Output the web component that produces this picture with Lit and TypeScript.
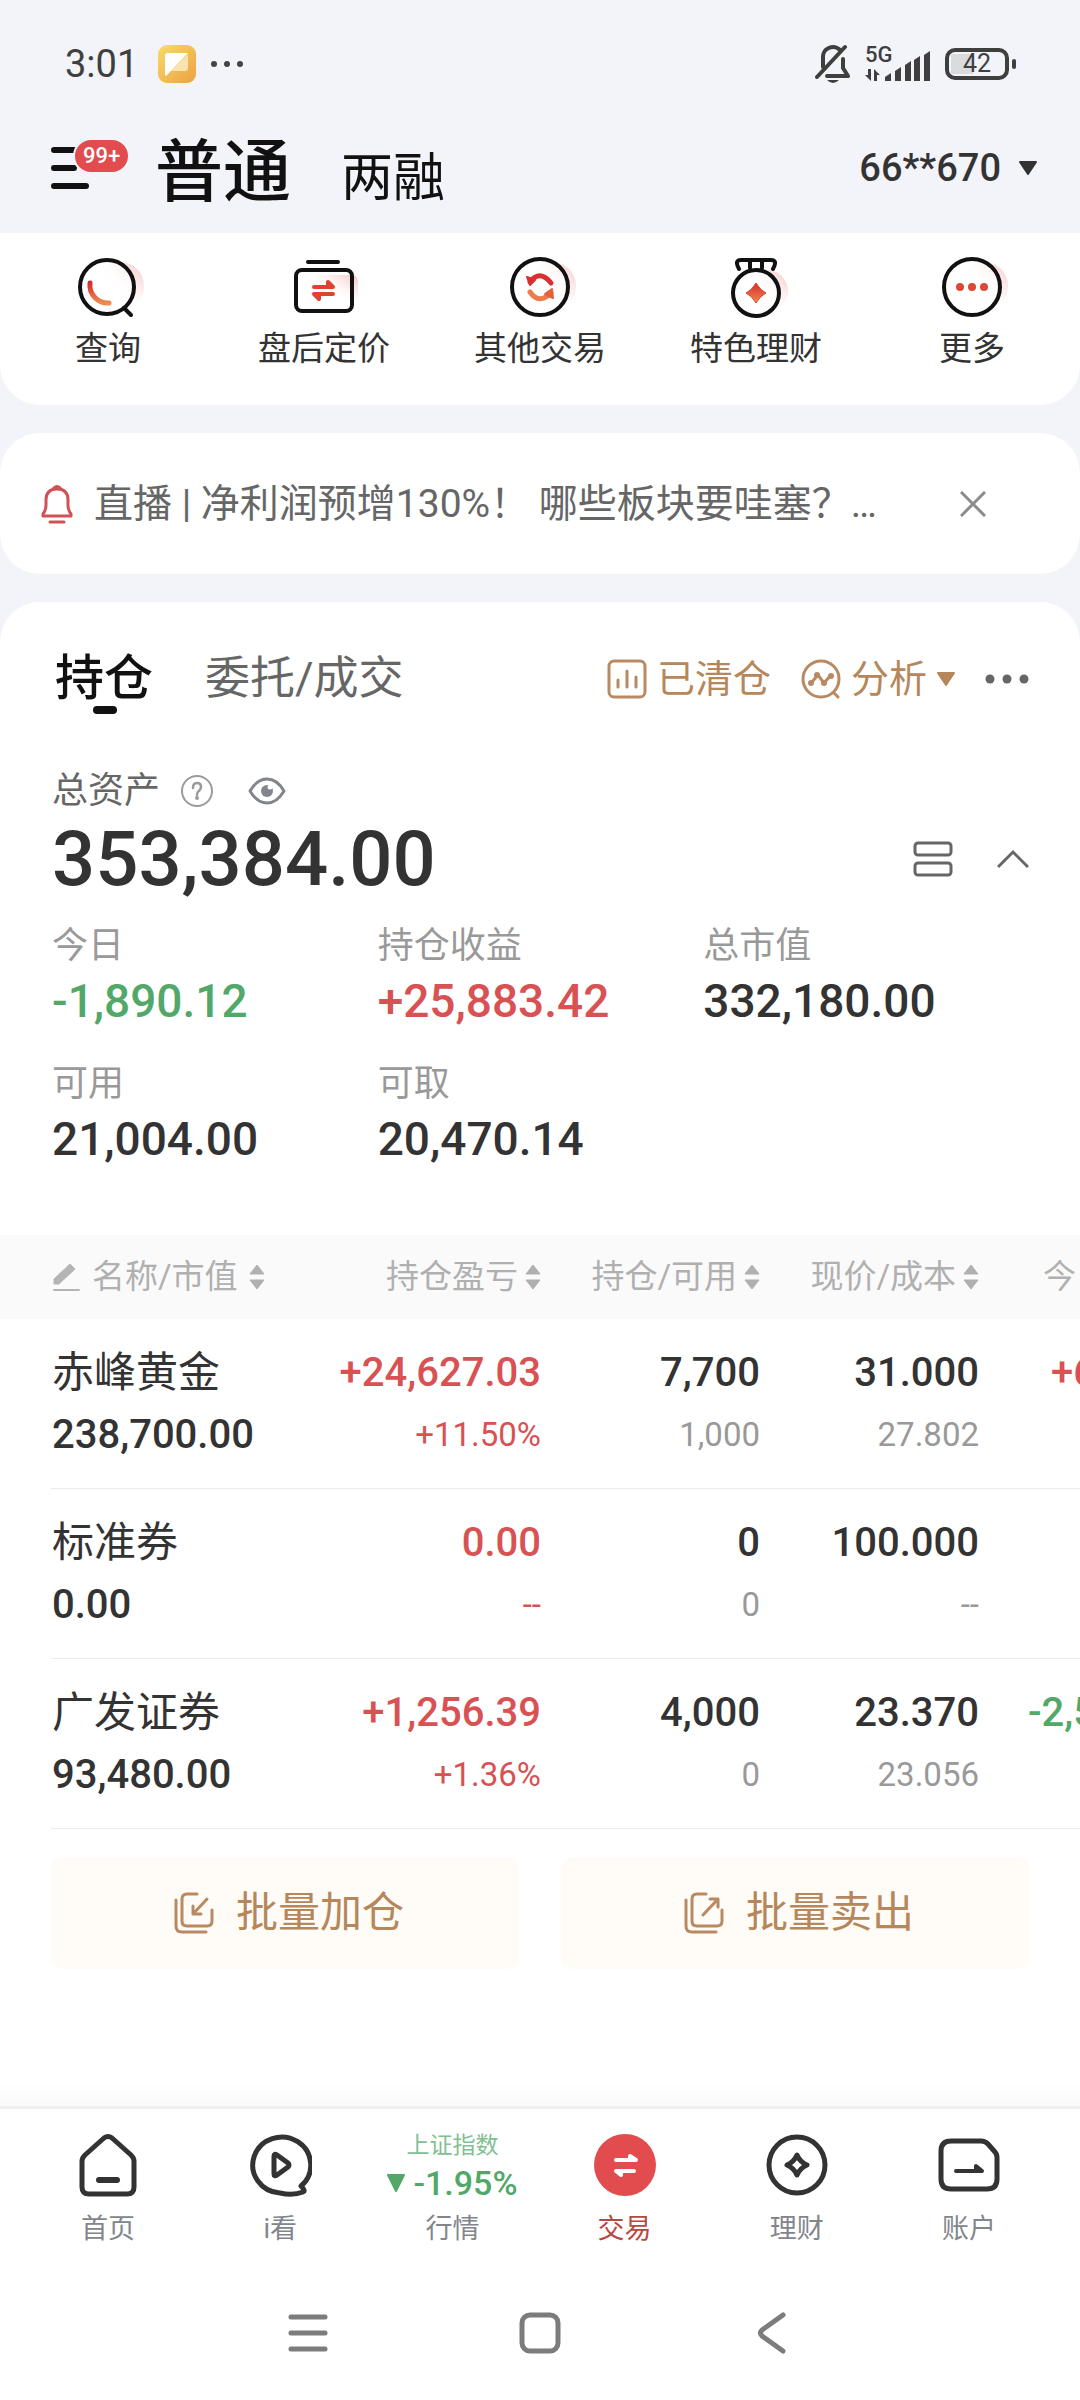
import { LitElement, html, css, svg, nothing } from "lit";
import { customElement, property } from "lit/decorators.js";

/* ---------- data ---------- */

const shortcuts = [
  { icon: "query", label: "查询" },
  { icon: "fixed", label: "盘后定价" },
  { icon: "other", label: "其他交易" },
  { icon: "wealth", label: "特色理财" },
  { icon: "more", label: "更多" },
];

const figures = [
  { label: "今日", value: "-1,890.12", tone: "down" },
  { label: "持仓收益", value: "+25,883.42", tone: "up" },
  { label: "总市值", value: "332,180.00", tone: "" },
  { label: "可用", value: "21,004.00", tone: "" },
  { label: "可取", value: "20,470.14", tone: "" },
];

const columns = ["名称/市值", "持仓盈亏", "持仓/可用", "现价/成本", "今日盈亏"];

const holdings = [
  { name: "赤峰黄金", worth: "238,700.00", gain: "+24,627.03", rate: "+11.50%", held: "7,700", free: "1,000", price: "31.000", cost: "27.802", today: "+630.00", tone: "up" },
  { name: "标准券", worth: "0.00", gain: "0.00", rate: "--", held: "0", free: "0", price: "100.000", cost: "--", today: "", tone: "up" },
  { name: "广发证券", worth: "93,480.00", gain: "+1,256.39", rate: "+1.36%", held: "4,000", free: "0", price: "23.370", cost: "23.056", today: "-2,520.00", tone: "down" },
];

/* ---------- icons ---------- */

const redFade = svg`
  <defs>
    <linearGradient id="hot" x1="0" y1="0" x2="0" y2="1">
      <stop offset="0" stop-color="#d92b2f" /><stop offset="1" stop-color="#ee8a4e" />
    </linearGradient>
    <linearGradient id="glow" x1="1" y1="0" x2="0" y2="1">
      <stop offset="0" stop-color="#f5c0c2" /><stop offset="0.6" stop-color="#fdf0f0" stop-opacity="0" />
    </linearGradient>
  </defs>`;

const icons: Record<string, { w: number; h: number; art: unknown }> = {
  query: {
    w: 80, h: 64,
    art: svg`${redFade}<circle cx="52" cy="31" r="24" fill="url(#glow)" /><circle cx="39" cy="32" r="27" fill="#fff" fill-opacity="0.6" stroke="#111" stroke-width="4" />
      <path d="M56 53l7 7" stroke="#111" stroke-width="4" stroke-linecap="round" />
      <path d="M22 28a18 18 0 0 0 19 20" fill="none" stroke="url(#hot)" stroke-width="5" stroke-linecap="round" />`,
  },
  fixed: {
    w: 80, h: 64,
    art: svg`${redFade}<rect x="28" y="20" width="46" height="28" rx="6" fill="url(#glow)" />
      <path d="M24 7h30" stroke="#111" stroke-width="4" stroke-linecap="round" />
      <rect x="12" y="15" width="56" height="41" rx="6" fill="none" stroke="#111" stroke-width="4" />
      <path d="M30 32h19l-5-5v5M49 39H30l5 5v-5" fill="#dd4232" stroke="#dd4232" stroke-width="4" stroke-linejoin="round" stroke-linecap="round" />`,
  },
  other: {
    w: 80, h: 64,
    art: svg`${redFade}<circle cx="52" cy="31" r="24" fill="url(#glow)" /><circle cx="40" cy="32" r="28" fill="#fff" fill-opacity="0.6" stroke="#111" stroke-width="4" />
      <path d="M30 27q10-13 21 1" fill="none" stroke="#d9302f" stroke-width="5" stroke-linecap="round" />
      <path d="M27 22l3 8 5-5z" fill="#d9302f" stroke="#d9302f" stroke-width="2" stroke-linejoin="round" />
      <path d="M30 37q9 13 21 1" fill="none" stroke="#ec7c49" stroke-width="5" stroke-linecap="round" />
      <path d="M53 43l-1-9-7 5z" fill="#e4603e" stroke="#e4603e" stroke-width="2" stroke-linejoin="round" />`,
  },
  wealth: {
    w: 80, h: 64,
    art: svg`${redFade}<circle cx="51" cy="36" r="21" fill="url(#glow)" /><circle cx="40" cy="38" r="23" fill="#fff" fill-opacity="0.6" stroke="#111" stroke-width="4" />
      <path d="M23 14q-5-9 2-9h30q7 0 2 9M34 6v7M46 6v7" fill="none" stroke="#111" stroke-width="4" stroke-linecap="round" />
      <path d="M40 28q4 7 10 10-6 3-10 10-4-7-10-10 6-3 10-10z" fill="url(#hot)" stroke="#df4633" stroke-width="1" stroke-linejoin="round" />`,
  },
  more: {
    w: 80, h: 64,
    art: svg`${redFade}<circle cx="52" cy="31" r="24" fill="url(#glow)" /><circle cx="40" cy="32" r="28" fill="#fff" fill-opacity="0.6" stroke="#111" stroke-width="4" />
      <g fill="#da4a36"><circle cx="28" cy="32" r="4" /><circle cx="40" cy="32" r="4" /><circle cx="52" cy="32" r="4" /></g>`,
  },
  menu: {
    w: 38, h: 44,
    art: svg`<path d="M3 4h20M3 22h20M3 40h32" stroke="#111" stroke-width="6" stroke-linecap="round" />`,
  },
  note: {
    w: 38, h: 38,
    art: svg`<defs><linearGradient id="amber" x1="0" y1="0" x2="1" y2="1"><stop offset="0" stop-color="#f7dc66" /><stop offset="1" stop-color="#ee9f45" /></linearGradient></defs>
      <rect width="38" height="38" rx="9" fill="url(#amber)" />
      <path d="M30 9v14a3 3 0 0 1-3 3H13z" fill="#fbe3b0" /><path d="M7 11a3 3 0 0 1 3-3h20L9 30q-2 2-2-1z" fill="#fff" />`,
  },
  dots: {
    w: 34, h: 8,
    art: svg`<g fill="#444"><circle cx="4" cy="4" r="3" /><circle cx="17" cy="4" r="3" /><circle cx="30" cy="4" r="3" /></g>`,
  },
  mute: {
    w: 36, h: 40,
    art: svg`<g fill="none" stroke="#3f3f3f" stroke-width="4" stroke-linecap="round" stroke-linejoin="round">
        <path d="M8 23V14a10 10 0 0 1 17-8M28 15v9l5 8H12" /><path d="M2 33L30 3" /></g>
      <path d="M12 36h12q-6 6-12 0z" fill="#3f3f3f" />`,
  },
  data: {
    w: 16, h: 12,
    art: svg`<path d="M6 0v12L0 6h3V0zM9 12V0l6 6h-3v6z" fill="#3f3f3f" />`,
  },
  signal: {
    w: 46, h: 30,
    art: svg`<g fill="#3f3f3f"><path d="M0 26l6-4v8H0zM10 20l6-4v14h-6zM20 14l6-4v20h-6zM29 9l6-4v25h-6zM39 4l6-4v30h-6z" /></g>`,
  },
  caret: { w: 18, h: 14, art: svg`<path d="M1 1h16l-8 12z" fill="currentColor" stroke="currentColor" stroke-width="2" stroke-linejoin="round" />` },
  fall: { w: 18, h: 18, art: svg`<path d="M1 1h16l-8 16z" fill="currentColor" stroke="currentColor" stroke-width="2" stroke-linejoin="round" />` },
  bell: {
    w: 32, h: 40,
    art: svg`<path d="M2 32V30q3-4 3-9V16q0-11 11-11t11 11v5q0 5 3 9v2zM12 5q4-5 8 0M9 38h14" fill="none" stroke="#cf5356" stroke-width="3" stroke-linejoin="round" stroke-linecap="round" />`,
  },
  close: { w: 26, h: 26, art: svg`<path d="M1 1l24 24M25 1L1 25" stroke="#8c8c8c" stroke-width="3" />` },
  chart: {
    w: 40, h: 40,
    art: svg`<rect x="2" y="2" width="36" height="36" rx="5" fill="none" stroke="#b98a62" stroke-width="3" /><path d="M11 21v7M20 12v16M29 18v10" stroke="#b98a62" stroke-width="3" stroke-linecap="round" />`,
  },
  analyse: {
    w: 40, h: 40,
    art: svg`<g fill="none" stroke="#b98a62" stroke-width="3" stroke-linecap="round"><circle cx="20" cy="20" r="18" /><path d="M33 34l4 4M10 24l7-8 6 8 6-7" /></g>
      <g fill="#b98a62"><circle cx="10" cy="24" r="3" /><circle cx="16" cy="16" r="3" /><circle cx="23" cy="24" r="3" /><circle cx="30" cy="17" r="3" /></g>`,
  },
  ellipsis: { w: 44, h: 10, art: svg`<g fill="#666"><circle cx="5" cy="5" r="4.500" /><circle cx="22" cy="5" r="4.500" /><circle cx="39" cy="5" r="4.500" /></g>` },
  help: {
    w: 34, h: 34,
    art: svg`<circle cx="17" cy="17" r="15" fill="none" stroke="#9a9a9a" stroke-width="2" /><path d="M13 14q0-5 4-5t4 4q0 2-2 4-2 1-2 4" fill="none" stroke="#9a9a9a" stroke-width="2.500" stroke-linecap="round" /><circle cx="17" cy="24" r="2" fill="#9a9a9a" />`,
  },
  eye: {
    w: 38, h: 28,
    art: svg`<path d="M2 14Q9 2 19 2t17 12Q29 26 19 26T2 14z" fill="none" stroke="#82858c" stroke-width="3" stroke-linejoin="round" /><circle cx="19" cy="14" r="6" fill="#82858c" /><circle cx="22" cy="10" r="2.500" fill="#fff" />`,
  },
  list: { w: 40, h: 36, art: svg`<g fill="none" stroke="#666" stroke-width="3"><rect x="2" y="2" width="36" height="12" rx="3" /><rect x="2" y="22" width="36" height="12" rx="3" /></g>` },
  fold: { w: 32, h: 20, art: svg`<path d="M1 18L16 3l15 15" fill="none" stroke="#666" stroke-width="3" />` },
  pencil: { w: 28, h: 28, art: svg`<path d="M1 21v-5L17 1l5 5L6 21z" fill="#b4b4b4" stroke="#b4b4b4" stroke-linejoin="round" /><path d="M1 27h25" stroke="#b4b4b4" stroke-width="2" stroke-linecap="round" />` },
  sort: { w: 16, h: 28, art: svg`<path d="M8 2l7 9H1zM8 26l7-9H1z" fill="#b0b0b0" stroke="#b0b0b0" stroke-linejoin="round" />` },
  buy: {
    w: 40, h: 42,
    art: svg`<g fill="none" stroke="#b98a62" stroke-width="3" stroke-linecap="round" stroke-linejoin="round"><path d="M23 2H13q-5 0-5 5v22q0 5 5 5h20q5 0 5-5V18M2 8v26q0 6 6 6h24" /><path d="M33 7L19 22M19 14v8h8" /></g>`,
  },
  sell: {
    w: 40, h: 42,
    art: svg`<g fill="none" stroke="#b98a62" stroke-width="3" stroke-linecap="round" stroke-linejoin="round"><path d="M22 2H13q-5 0-5 5v22q0 5 5 5h20q5 0 5-5V18M2 8v26q0 6 6 6h24" /><path d="M19 23L34 7M26 7h8v8" /></g>`,
  },
  home: {
    w: 64, h: 64,
    art: svg`<path d="M6 28q0-3 3-6L28 5q4-3 8 0l19 17q3 3 3 6v26q0 7-7 7H13q-7 0-7-7z" fill="none" stroke="#333" stroke-width="5" stroke-linejoin="round" /><path d="M23 47h18" stroke="#333" stroke-width="6" stroke-linecap="round" />`,
  },
  watch: {
    w: 64, h: 64,
    art: svg`<path d="M53 53A29 28 0 1 0 32 60q13 3 23-1 3-1-2-6z" fill="none" stroke="#333" stroke-width="5" stroke-linejoin="round" />
      <path d="M26 23v18q0 3 3 1l11-8q2-2 0-4l-11-8q-3-2-3 1z" fill="none" stroke="#333" stroke-width="5" stroke-linejoin="round" />`,
  },
  trade: {
    w: 64, h: 64,
    art: svg`<circle cx="32" cy="32" r="31" fill="#e24c4e" /><path d="M23 27h20l-6-4v4M41 38H23l5 4v-4" fill="#fff" stroke="#fff" stroke-width="4" stroke-linecap="round" stroke-linejoin="round" />`,
  },
  gold: {
    w: 64, h: 64,
    art: svg`<circle cx="32" cy="32" r="28" fill="none" stroke="#333" stroke-width="5" /><path d="M32 22q3 7 10 10-7 3-10 10-3-7-10-10 7-3 10-10z" fill="none" stroke="#333" stroke-width="5" stroke-linejoin="round" />`,
  },
  account: {
    w: 64, h: 64,
    art: svg`<path d="M14 8h30q4 0 7 3l7 8q2 2 2 6v21q0 10-10 10H14Q4 56 4 46V18Q4 8 14 8z" fill="none" stroke="#333" stroke-width="5" /><path d="M19 38h26l-6-5v5" fill="#333" stroke="#333" stroke-width="4" stroke-linecap="round" stroke-linejoin="round" />`,
  },
  recents: { w: 44, h: 44, art: svg`<path d="M5 6h34M5 22h34M5 38h34" stroke="#7c7c7c" stroke-width="5" stroke-linecap="round" />` },
  homekey: { w: 44, h: 44, art: svg`<rect x="4" y="4" width="36" height="36" rx="8" fill="none" stroke="#7c7c7c" stroke-width="5" />` },
  back: { w: 44, h: 44, art: svg`<path d="M33 4L12 19q-3 3 0 6l21 15" fill="none" stroke="#7c7c7c" stroke-width="5" stroke-linecap="round" stroke-linejoin="round" />` },
};

const icon = (name: string) => {
  const { w, h, art } = icons[name];
  return html`<svg width=${w} height=${h} viewBox="0 0 ${w} ${h}" aria-hidden="true">${art}</svg>`;
};

const base = css`
  :host {
    display: block;
    font-family: Roboto, "Noto Sans CJK SC", sans-serif;
    color: #333;
  }
  *, *::before, *::after { box-sizing: border-box; }
  svg { display: block; flex: none; }
  button, a {
    font: inherit;
    color: inherit;
    background: none;
    border: 0;
    padding: 0;
    margin: 0;
    text-decoration: none;
    white-space: nowrap;
  }
  dl, dd, dt { margin: 0; font: inherit; }
  .up { color: #d85153; }
  .down { color: #52a868; }
`;

/* ---------- top: system status and account header ---------- */

@customElement("status-bar")
class StatusBar extends LitElement {
  static styles = [base, css`
    .bar { display: flex; align-items: center; justify-content: space-between; height: 128px; padding: 0 64px 0 65px; color: #3f3f3f; }
    .side { display: flex; align-items: center; gap: 14px; }
    .clock { font-size: 38px; line-height: 44px; margin-right: 6px; }
    .net { display: flex; align-items: flex-end; }
    .gen { display: flex; flex-direction: column; gap: 6px; width: 20px; font-size: 22px; line-height: 16px; font-weight: 500; white-space: nowrap; }
    .battery { display: flex; align-items: center; gap: 3px; }
    .cell { width: 64px; height: 32px; border: 4px solid #3f3f3f; border-radius: 10px; font-size: 25px; line-height: 24px; text-align: center; background: linear-gradient(90deg, #d9dbdf 22px, transparent 22px) 2px 2px / 52px 20px no-repeat; }
    .nub { width: 4px; height: 10px; border-radius: 2px; background: #3f3f3f; }
  `];
  render() {
    return html`<div class="bar">
      <div class="side"><span class="clock">3:01</span>${icon("note")}${icon("dots")}</div>
      <div class="side">
        ${icon("mute")}
        <div class="net"><div class="gen"><span>5G</span>${icon("data")}</div>${icon("signal")}</div>
        <div class="battery"><div class="cell">42</div><i class="nub"></i></div>
      </div>
    </div>`;
  }
}

@customElement("account-header")
class AccountHeader extends LitElement {
  static styles = [base, css`
    .head { display: flex; align-items: center; height: 105px; padding: 0 43px 25px 51px; color: #111; }
    .menu { position: relative; display: block; width: 78px; }
    .badge { position: absolute; left: 22px; top: -8px; padding: 0 8px; border: 2px solid #f3f4f9; border-radius: 18px; background: #e24c4e; color: #fff; font-size: 22px; line-height: 32px; font-weight: 500; }
    .kinds { display: flex; align-items: baseline; gap: 50px; margin-left: 26px; padding-top: 16px; flex: 1; }
    .on { font-size: 68px; line-height: 80px; font-weight: 500; }
    .off { font-size: 52px; line-height: 80px; }
    .user { display: flex; align-items: center; gap: 18px; font-size: 38px; line-height: 44px; font-weight: 500; color: #333; }
  `];
  render() {
    return html`<header class="head">
      <button class="menu" aria-label="菜单">${icon("menu")}<span class="badge">99+</span></button>
      <nav class="kinds"><button class="on">普通</button><button class="off">两融</button></nav>
      <button class="user">66**670 ${icon("caret")}</button>
    </header>`;
  }
}

@customElement("shortcut-row")
class ShortcutRow extends LitElement {
  static styles = [base, css`
    .row { display: grid; grid-template-columns: repeat(5, 1fr); padding: 22px 0 34px; background: #fff; border-radius: 0 0 40px 40px; }
    .item { display: flex; flex-direction: column; align-items: center; gap: 8px; font-size: 33px; line-height: 44px; }
  `];
  render() {
    return html`<nav class="row">${shortcuts.map((s) => html`<a class="item" href="#">${icon(s.icon)}<span>${s.label}</span></a>`)}</nav>`;
  }
}

@customElement("notice-bar")
class NoticeBar extends LitElement {
  static styles = [base, css`
    .bar { display: flex; align-items: center; height: 141px; padding: 0 94px 0 41px; background: #fff; border-radius: 40px; color: #666; }
    .text { flex: 1; margin-left: 21px; font-size: 39px; line-height: 58px; white-space: nowrap; overflow: hidden; }
  `];
  render() {
    return html`<section class="bar">${icon("bell")}<a class="text" href="#">直播 | 净利润预增130%！ 哪些板块要哇塞？…</a><button aria-label="关闭">${icon("close")}</button></section>`;
  }
}

/* ---------- positions ---------- */

@customElement("asset-summary")
class AssetSummary extends LitElement {
  static styles = [base, css`
    .wrap { padding: 0 51px 0 52px; }
    .tabs { display: flex; align-items: center; height: 154px; }
    .on { position: relative; font-size: 49px; line-height: 64px; font-weight: 500; color: #111; padding-left: 3px; }
    .on::after { content: ""; position: absolute; left: 50%; bottom: -3px; width: 24px; height: 8px; margin-left: -10px; border-radius: 4px; background: #111; }
    .off { font-size: 45px; line-height: 64px; color: #666; margin-left: 52px; flex: 1; text-align: left; }
    .tool { display: flex; align-items: center; gap: 10px; font-size: 38px; line-height: 56px; color: #b5875a; margin-right: 30px; }
    .label { display: flex; align-items: center; gap: 20px; margin-top: 13px; font-size: 36px; line-height: 44px; color: #666; }
    .help { margin-right: 14px; }
    .total { display: flex; align-items: center; height: 92px; margin-bottom: 16px; font-size: 76px; line-height: 92px; font-weight: 500; }
    .grow { flex: 1; }
    .fold { margin-left: 44px; }
    .grid { display: grid; grid-template-columns: repeat(3, 1fr); row-gap: 28px; }
    .name { font-size: 36px; line-height: 50px; color: #999; }
    .value { font-size: 46px; line-height: 60px; font-weight: 500; }
  `];
  render() {
    return html`<section class="wrap">
      <nav class="tabs">
        <button class="on">持仓</button><button class="off">委托/成交</button>
        <button class="tool">${icon("chart")}已清仓</button>
        <button class="tool">${icon("analyse")}分析${icon("caret")}</button>
        <button aria-label="更多">${icon("ellipsis")}</button>
      </nav>
      <div class="label">总资产<button class="help" aria-label="说明">${icon("help")}</button><button aria-label="隐藏金额">${icon("eye")}</button></div>
      <div class="total"><span class="grow">353,384.00</span><button aria-label="切换布局">${icon("list")}</button><button class="fold" aria-label="收起">${icon("fold")}</button></div>
      <dl class="grid">${figures.map((f) => html`<div><dt class="name">${f.label}</dt><dd class="value ${f.tone}">${f.value}</dd></div>`)}</dl>
    </section>`;
  }
}

@customElement("holdings-table")
class HoldingsTable extends LitElement {
  static styles = [base, css`
    .scroll { padding-left: 51px; overflow-x: auto; scrollbar-width: none; }
    table { width: calc(100% + 118px); table-layout: fixed; border-collapse: separate; border-spacing: 0; }
    .wide { width: 219px; }
    th { height: 84px; padding: 0; background: #fafafa; font-weight: 400; font-size: 33px; line-height: 44px; color: #b0b0b0; }
    th:first-child { box-shadow: -51px 0 0 #fafafa; }
    .sort { display: flex; align-items: center; justify-content: flex-end; gap: 7px; width: 100%; }
    .lead { justify-content: flex-start; gap: 11px; padding-left: 2px; }
    td { height: 170px; padding: 0; vertical-align: middle; text-align: right; white-space: nowrap; border-bottom: 1px solid #ebebeb; }
    .main { font-size: 40px; line-height: 62px; font-weight: 500; }
    .sub { font-size: 33px; line-height: 62px; min-height: 62px; color: #999; }
    .up { color: #d85153; }
    .first { text-align: left; padding-left: 1px; }
    .first .main { font-size: 42px; font-weight: 400; }
    .first .sub { font-size: 40px; font-weight: 500; color: inherit; }
  `];
  private cell(main: string, sub: string, tone = "", subTone = "") {
    return html`<td><div class="main ${tone}">${main}</div><div class="sub ${subTone}">${sub}</div></td>`;
  }
  render() {
    return html`<div class="scroll"><table>
      <colgroup><col />${columns.slice(1).map(() => html`<col class="wide" />`)}</colgroup>
      <thead><tr>${columns.map((c, i) => html`<th scope="col"><button class="sort ${i ? "" : "lead"}">${i ? nothing : icon("pencil")}<span>${c}</span>${icon("sort")}</button></th>`)}</tr></thead>
      <tbody>${holdings.map((h) => html`<tr>
        <td class="first"><div class="main">${h.name}</div><div class="sub">${h.worth}</div></td>
        ${this.cell(h.gain, h.rate, "up", "up")}${this.cell(h.held, h.free)}${this.cell(h.price, h.cost)}${this.cell(h.today, "", h.tone)}
      </tr>`)}</tbody>
    </table></div>`;
  }
}

@customElement("batch-actions")
class BatchActions extends LitElement {
  static styles = [base, css`
    .row { display: grid; grid-template-columns: 1fr 1fr; gap: 42px; padding: 28px 51px; }
    .btn { display: flex; align-items: center; justify-content: center; gap: 22px; height: 112px; padding-left: 8px; border-radius: 10px; background: #fffbf7; color: #b5875a; font-size: 42px; line-height: 56px; }
  `];
  render() {
    return html`<div class="row"><button class="btn">${icon("buy")}批量加仓</button><button class="btn">${icon("sell")}批量卖出</button></div>`;
  }
}

/* ---------- bottom ---------- */

@customElement("nav-item")
class NavItem extends LitElement {
  @property() icon = "";
  @property() label = "";
  @property({ type: Boolean }) active = false;
  static styles = [base, css`
    .item { display: flex; flex-direction: column; align-items: center; gap: 14px; font-size: 27px; line-height: 36px; color: #82868c; }
    .active { color: #b44a42; }
    .index { display: flex; flex-direction: column; align-items: center; height: 64px; color: #52a868; }
    .title { font-size: 23px; line-height: 26px; color: #80c092; }
    .move { display: flex; align-items: center; gap: 8px; font-size: 34px; line-height: 48px; font-weight: 500; }
  `];
  render() {
    return html`<a class="item ${this.active ? "active" : ""}" href="#">
      ${this.icon
        ? icon(this.icon)
        : html`<span class="index"><span class="title">上证指数</span><span class="move">${icon("fall")}-1.95%</span></span>`}
      <span>${this.label}</span>
    </a>`;
  }
}

@customElement("bottom-bars")
class BottomBars extends LitElement {
  static styles = [base, css`
    .fade { height: 24px; background: linear-gradient(#fff, #fafafa); }
    .tabs { display: grid; grid-template-columns: repeat(6, 1fr); padding: 24px 25px 16px 22px; border-top: 3px solid #efefef; background: #fff; }
    .keys { display: flex; justify-content: center; gap: 188px; padding: 48px 0 45px; background: #fff; }
  `];
  render() {
    return html`<div class="fade"></div>
      <nav class="tabs">
        <nav-item icon="home" label="首页"></nav-item>
        <nav-item icon="watch" label="i看"></nav-item>
        <nav-item label="行情"></nav-item>
        <nav-item icon="trade" label="交易" active></nav-item>
        <nav-item icon="gold" label="理财"></nav-item>
        <nav-item icon="account" label="账户"></nav-item>
      </nav>
      <div class="keys"><button aria-label="最近任务">${icon("recents")}</button><button aria-label="主屏幕">${icon("homekey")}</button><button aria-label="返回">${icon("back")}</button></div>`;
  }
}

@customElement("app-root")
class AppRoot extends LitElement {
  static styles = [base, css`
    :host { min-height: 100vh; background: #f3f4f9; }
    .page { display: flex; flex-direction: column; min-height: 100vh; }
    .stack { display: flex; flex-direction: column; gap: 28px; flex: 1; }
    .card { display: flex; flex-direction: column; flex: 1; padding-bottom: 24px; background: #fff; border-radius: 40px 40px 0 0; }
    .table { margin-top: 66px; }
  `];
  render() {
    return html`<div class="page">
      <status-bar></status-bar>
      <account-header></account-header>
      <main class="stack">
        <shortcut-row></shortcut-row>
        <notice-bar></notice-bar>
        <section class="card">
          <asset-summary></asset-summary>
          <holdings-table class="table"></holdings-table>
          <batch-actions></batch-actions>
        </section>
      </main>
      <bottom-bars></bottom-bars>
    </div>`;
  }
}
